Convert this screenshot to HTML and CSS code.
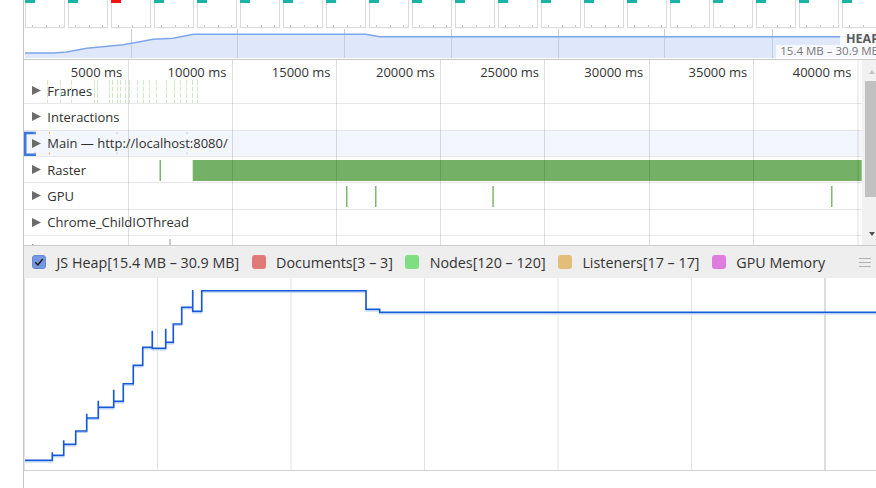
FILE: index.html
```html
<!DOCTYPE html>
<html>
<head>
<meta charset="utf-8">
<link rel="stylesheet" href="styles.css">
</head>
<body>
<div class="panel">
  <section class="overview">
    <div class="filmstrip">
      <div class="frame"><span class="mark"></span></div>
      <div class="frame"><span class="mark"></span></div>
      <div class="frame"><span class="mark red"></span></div>
      <div class="frame"><span class="mark"></span></div>
      <div class="frame"><span class="mark"></span></div>
      <div class="frame"><span class="mark"></span></div>
      <div class="frame"><span class="mark"></span></div>
      <div class="frame"><span class="mark"></span></div>
      <div class="frame"><span class="mark"></span></div>
      <div class="frame"><span class="mark"></span></div>
      <div class="frame"><span class="mark"></span></div>
      <div class="frame"><span class="mark"></span></div>
      <div class="frame"><span class="mark"></span></div>
      <div class="frame"><span class="mark"></span></div>
      <div class="frame"><span class="mark"></span></div>
      <div class="frame"><span class="mark"></span></div>
      <div class="frame"><span class="mark"></span></div>
      <div class="frame"><span class="mark"></span></div>
      <div class="frame"><span class="mark"></span></div>
      <div class="frame"><span class="mark"></span></div>
    </div>
    <div class="heap-overview">
      <svg class="heap-svg" width="852" height="31" viewBox="0 0 852 31">
        <polygon fill="#dfe7fb" points="1,25 29.3,25 42.7,24 62.7,20.3 99.3,16.7 129.3,11.3 149.3,10.3 169.3,6.3 342,6.3 356,8.7 852,8.7 852,30 1,30"/>
        <g stroke="#c6ccda" stroke-width="1">
          <line x1="107.5" y1="1" x2="107.5" y2="30"/>
          <line x1="213.5" y1="1" x2="213.5" y2="30"/>
          <line x1="320.5" y1="1" x2="320.5" y2="30"/>
          <line x1="427.5" y1="1" x2="427.5" y2="30"/>
          <line x1="534.5" y1="1" x2="534.5" y2="30"/>
          <line x1="640.5" y1="1" x2="640.5" y2="30"/>
          <line x1="748.5" y1="1" x2="748.5" y2="30"/>
        </g>
        <polyline fill="none" stroke="#7ea6ef" stroke-width="1.5" points="1,25 29.3,25 42.7,24 62.7,20.3 99.3,16.7 129.3,11.3 149.3,10.3 169.3,6.3 342,6.3 356,8.7 852,8.7"/>
      </svg>
      <div class="heap-label">
        <span class="heap-title">HEAP</span>
        <span class="heap-range">15.4 MB – 30.9 MB</span>
      </div>
    </div>
  </section>

  <section class="timeline">
    <div class="lanes">
      <div class="ruler">
        <span>5000 ms</span><span>10000 ms</span><span>15000 ms</span><span>20000 ms</span><span>25000 ms</span><span>30000 ms</span><span>35000 ms</span><span>40000 ms</span>
      </div>
      <div class="track"><svg class="tri" viewBox="0 0 9 9"><polygon points="0,0 9,4.5 0,9"/></svg><span>Frames</span></div>
      <div class="track"><svg class="tri" viewBox="0 0 9 9"><polygon points="0,0 9,4.5 0,9"/></svg><span>Interactions</span></div>
      <div class="track main"><svg class="tri" viewBox="0 0 9 9"><polygon points="0,0 9,4.5 0,9"/></svg><span>Main — http://localhost:8080/</span></div>
      <div class="track"><svg class="tri" viewBox="0 0 9 9"><polygon points="0,0 9,4.5 0,9"/></svg><span>Raster</span></div>
      <div class="track"><svg class="tri" viewBox="0 0 9 9"><polygon points="0,0 9,4.5 0,9"/></svg><span>GPU</span></div>
      <div class="track"><svg class="tri" viewBox="0 0 9 9"><polygon points="0,0 9,4.5 0,9"/></svg><span>Chrome_ChildIOThread</span></div>
      <div class="track"><svg class="tri" viewBox="0 0 9 9"><polygon points="0,0 9,4.5 0,9"/></svg><span>Compositor 11894</span></div>

      <svg class="overlay" width="838" height="185" viewBox="0 0 838 185">
        <g stroke="#cfe9c9" stroke-width="1" stroke-dasharray="5 1.5">
          <line x1="23.5" y1="20" x2="23.5" y2="43"/>
          <line x1="36.5" y1="20" x2="36.5" y2="43"/>
          <line x1="47.5" y1="20" x2="47.5" y2="43"/>
          <line x1="70.5" y1="20" x2="70.5" y2="43"/>
          <line x1="73.5" y1="20" x2="73.5" y2="43"/>
          <line x1="85.5" y1="20" x2="85.5" y2="43"/>
          <line x1="88.5" y1="20" x2="88.5" y2="43"/>
          <line x1="93.5" y1="20" x2="93.5" y2="43"/>
          <line x1="96.5" y1="20" x2="96.5" y2="43"/>
          <line x1="101.5" y1="20" x2="101.5" y2="43"/>
          <line x1="105.5" y1="20" x2="105.5" y2="43"/>
          <line x1="113.5" y1="20" x2="113.5" y2="43"/>
          <line x1="119.5" y1="20" x2="119.5" y2="43"/>
          <line x1="125.5" y1="20" x2="125.5" y2="43"/>
          <line x1="132.5" y1="20" x2="132.5" y2="43"/>
          <line x1="142.5" y1="20" x2="142.5" y2="43"/>
          <line x1="150.5" y1="20" x2="150.5" y2="43"/>
          <line x1="156.5" y1="20" x2="156.5" y2="43"/>
          <line x1="162.5" y1="20" x2="162.5" y2="43"/>
          <line x1="168.5" y1="20" x2="168.5" y2="43"/>
          <line x1="173.5" y1="20" x2="173.5" y2="43"/>
        </g>
        <path d="M12 73 H1.25 V94.8 H12" fill="none" stroke="#3a78e0" stroke-width="2.5"/>
        <g fill="#a58be0">
          <rect x="10.5" y="72" width="1.2" height="2"/>
          <rect x="10.5" y="92.5" width="1.2" height="2"/>
        </g>
        <g fill="#e8b55a">
          <rect x="24.8" y="72" width="1.2" height="2"/>
          <rect x="24.8" y="92.5" width="1.2" height="2"/>
        </g>
        <g fill="#c9c9c9">
          <rect x="92.5" y="72" width="1" height="2"/>
          <rect x="92.5" y="92.5" width="1" height="2"/>
          <rect x="162.5" y="72" width="1" height="2"/>
          <rect x="162.5" y="92.5" width="1" height="2"/>
        </g>
        <rect x="135.5" y="100" width="1.5" height="21" fill="#7ab66c"/>
        <rect x="168.7" y="100" width="669" height="21" fill="#74b166"/>
        <g fill="#7cb96f">
          <rect x="322" y="126" width="1.5" height="21"/>
          <rect x="351" y="126" width="1.5" height="21"/>
          <rect x="468.3" y="126" width="1.5" height="21"/>
          <rect x="807" y="126" width="1.5" height="21"/>
        </g>
        <rect x="145.5" y="179" width="1" height="6" fill="#9a9a9a"/>
        <g stroke="#000" stroke-opacity="0.13" stroke-width="1">
          <line x1="104.5" y1="0" x2="104.5" y2="185"/>
          <line x1="208.5" y1="0" x2="208.5" y2="185"/>
          <line x1="312.5" y1="0" x2="312.5" y2="185"/>
          <line x1="416.5" y1="0" x2="416.5" y2="185"/>
          <line x1="520.5" y1="0" x2="520.5" y2="185"/>
          <line x1="625.5" y1="0" x2="625.5" y2="185"/>
          <line x1="729.5" y1="0" x2="729.5" y2="185"/>
          <line x1="834" y1="0" x2="834" y2="185"/>
        </g>
      </svg>
    </div>
    <div class="scrollbar">
      <svg class="sb-arrow" width="6" height="4" viewBox="0 0 6 4"><polygon points="0,4 3,0 6,4" fill="#c2c2c2"/></svg>
      <div class="sb-thumb"></div>
      <svg class="sb-arrow down" width="6" height="4" viewBox="0 0 6 4"><polygon points="0,0 6,0 3,4" fill="#505050"/></svg>
    </div>
  </section>

  <section class="legend">
    <div class="item">
      <svg class="check" width="14" height="14" viewBox="0 0 14 14"><rect x="0.5" y="0.5" width="13" height="13" rx="2.5" fill="#7598e0" stroke="#6488d6"/><path d="M3.3 7.2 L5.9 9.9 L10.8 4.1" fill="none" stroke="#1c1c1c" stroke-width="1.5"/></svg>
      <span>JS Heap[15.4 MB – 30.9 MB]</span>
    </div>
    <div class="item"><span class="swatch documents"></span><span>Documents[3 – 3]</span></div>
    <div class="item"><span class="swatch nodes"></span><span>Nodes[120 – 120]</span></div>
    <div class="item"><span class="swatch listeners"></span><span>Listeners[17 – 17]</span></div>
    <div class="item"><span class="swatch gpu"></span><span>GPU Memory</span></div>
    <svg class="menu" width="12" height="10" viewBox="0 0 12 10"><g stroke="#b2b2b2" stroke-width="1"><line x1="0" y1="1.5" x2="12" y2="1.5"/><line x1="0" y1="5.5" x2="12" y2="5.5"/><line x1="0" y1="9.5" x2="12" y2="9.5"/></g></svg>
  </section>

  <section class="chart">
    <svg width="852" height="192" viewBox="0 0 852 192">
      <line x1="0.5" y1="0" x2="0.5" y2="192" stroke="#e2e2e2"/>
      <g stroke="#e2e2e2" stroke-width="1">
        <line x1="133.5" y1="0" x2="133.5" y2="192"/>
        <line x1="267" y1="0" x2="267" y2="192"/>
        <line x1="400.5" y1="0" x2="400.5" y2="192"/>
        <line x1="534" y1="0" x2="534" y2="192"/>
        <line x1="667.5" y1="0" x2="667.5" y2="192"/>
        <line x1="801" y1="0" x2="801" y2="192" stroke-width="2" stroke="#dddddd"/>
      </g>
      <path transform="translate(0,1.4)" fill="none" stroke="#b8cff6" stroke-width="1.4" d="M1 182.3 H28.3 V174.3 V177.3 H39.7 V162.3 V166.3 H51.7 V153 H62.7 V135.7 V140 H74.3 V122.7 V129.3 H89.7 V111.7 V123.3 H99.3 V105.7 H109.3 V87.3 H118.7 V69.3 H128.3 V52.7 V70.3 H141.7 V50.7 V64.3 H149.3 V46 H157.7 V29.3 H168.7 V12 V33.3 H177.7 V12.7 H342 V31.3 H355.7 V34.3 H852"/>
      <path fill="none" stroke="#1658d8" stroke-width="1.6" d="M1 182.3 H28.3 V174.3 V177.3 H39.7 V162.3 V166.3 H51.7 V153 H62.7 V135.7 V140 H74.3 V122.7 V129.3 H89.7 V111.7 V123.3 H99.3 V105.7 H109.3 V87.3 H118.7 V69.3 H128.3 V52.7 V70.3 H141.7 V50.7 V64.3 H149.3 V46 H157.7 V29.3 H168.7 V12 V33.3 H177.7 V12.7 H342 V31.3 H355.7 V34.3 H852"/>
    </svg>
  </section>
</div>
</body>
</html>
```

FILE: styles.css
```css
html, body {
  margin: 0;
  padding: 0;
}

body {
  width: 876px;
  height: 488px;
  overflow: hidden;
  background: #ffffff;
  font-family: "Open Sans", "Noto Sans", sans-serif;
  color: #333333;
}

.panel {
  margin-left: 23px;
  border-left: 1px solid #c9c9c9;
  height: 488px;
  display: flex;
  flex-direction: column;
}

/* ---------- overview ---------- */
.overview {
  flex: none;
  height: 59px;
  border-bottom: 1px solid #c9c9c9;
}

.filmstrip {
  height: 28px;
  display: flex;
  gap: 3px;
  padding-left: 1px;
  overflow: hidden;
}

.frame {
  flex: none;
  width: 40px;
  height: 28px;
  box-sizing: border-box;
  border: 1px solid #dadada;
  border-top: none;
  background:
    linear-gradient(#c8c8c8, #c8c8c8) no-repeat 6px 25px / 1px 2px,
    linear-gradient(#c8c8c8, #c8c8c8) no-repeat 19.5px 25px / 1px 2px,
    linear-gradient(#c8c8c8, #c8c8c8) no-repeat 32.5px 25px / 1px 2px,
    #ffffff;
}

.mark {
  display: block;
  width: 10px;
  height: 3px;
  margin-left: -1px;
  background: #19b4a6;
}

.mark.red {
  background: #ff1010;
}

.heap-overview {
  position: relative;
  height: 31px;
  overflow: hidden;
}

.heap-svg {
  display: block;
}

.heap-label {
  position: absolute;
  right: -3px;
  top: 4px;
  display: flex;
  flex-direction: column;
  align-items: flex-end;
  white-space: nowrap;
}

.heap-title {
  font-weight: 700;
  font-size: 12.5px;
  line-height: 13px;
  color: #5a5a5a;
  padding-left: 6px;
  background: rgba(255, 255, 255, 0.85);
}

.heap-range {
  font-size: 11.5px;
  line-height: 12px;
  color: #777777;
  padding: 0 0 2px 4px;
  background: rgba(255, 255, 255, 0.75);
}

/* ---------- tracks ---------- */
.timeline {
  flex: none;
  height: 185px;
  display: flex;
}

.lanes {
  flex: 1;
  position: relative;
  overflow: hidden;
}

.ruler {
  height: 18px;
  box-sizing: border-box;
  padding-top: 4px;
  display: flex;
  font-size: 13px;
  line-height: 16px;
  color: #333333;
}

.ruler span {
  flex: none;
  width: 104.2px;
  box-sizing: border-box;
  padding-right: 6px;
  text-align: right;
  white-space: nowrap;
}

.track {
  height: 26.33px;
  box-sizing: border-box;
  border-bottom: 1px solid #e7e7e7;
  display: flex;
  align-items: center;
  gap: 6px;
  padding-left: 8.3px;
  font-size: 13px;
  white-space: nowrap;
  color: #303030;
}

.track.main {
  background: #f3f7fd;
}

.tri {
  flex: none;
  width: 9px;
  height: 9px;
  fill: #6b6b6b;
}

.overlay {
  position: absolute;
  left: 0;
  top: 0;
  pointer-events: none;
}

.scrollbar {
  flex: none;
  width: 14px;
  background: #f1f1f1;
  display: flex;
  flex-direction: column;
  padding-top: 10px;
  box-sizing: border-box;
}

.sb-arrow {
  display: block;
  margin-left: 7px;
}

.sb-arrow.down {
  margin-top: 35px;
}

.sb-thumb {
  width: 11px;
  height: 116px;
  margin-top: 6.7px;
  margin-left: 3px;
  background: #c1c1c1;
}

/* ---------- legend ---------- */
.legend {
  flex: none;
  height: 33px;
  box-sizing: border-box;
  border-top: 1px solid #cbcbcb;
  background: #eeeeee;
  display: flex;
  align-items: center;
  padding-left: 8px;
  font-size: 14.3px;
  white-space: nowrap;
  color: #333333;
}

.item {
  display: flex;
  align-items: center;
  gap: 10.5px;
  margin-right: 12.3px;
}

.check {
  flex: none;
  display: block;
}

.swatch {
  flex: none;
  width: 14px;
  height: 14px;
  border-radius: 3px;
}

.swatch.documents { background: #e27979; }
.swatch.nodes { background: #7fde7f; }
.swatch.listeners { background: #e3be78; }
.swatch.gpu { background: #df7ddf; }

.menu {
  flex: none;
  margin-left: auto;
  margin-right: 5px;
}

/* ---------- chart ---------- */
.chart {
  flex: none;
  height: 192px;
  border-bottom: 1px solid #d2d2d2;
}

.chart svg {
  display: block;
}
```
